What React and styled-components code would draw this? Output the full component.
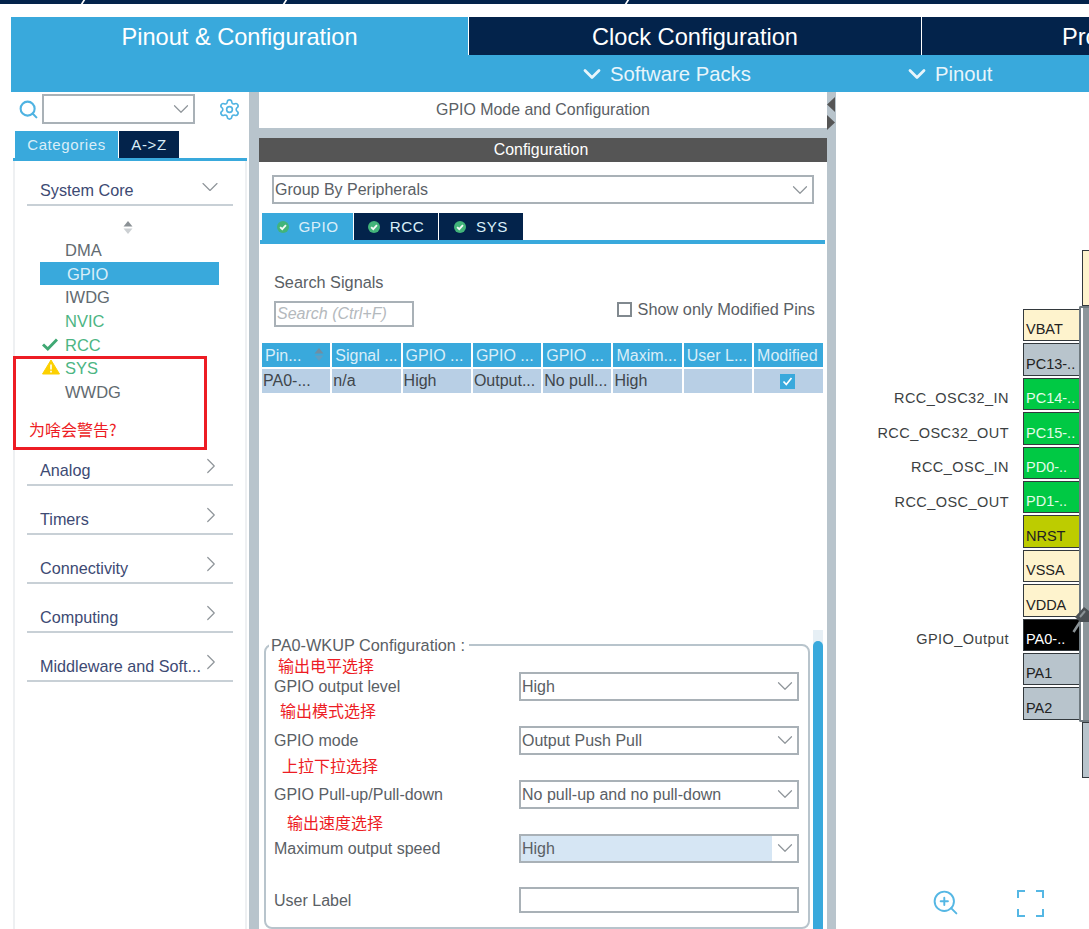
import React from "react";
import styled, { createGlobalStyle } from "styled-components";
import { ChevronDown, ChevronRight, Search, Settings, ZoomIn } from "lucide-react";

const BLUE = "#39a9dc";
const NAVY = "#03234b";
const SPLIT = "#b8c4cc";
const TEXT = "#5a6065";
const CJK = `"Liberation Sans", "Noto Sans CJK SC", sans-serif`;

const GlobalStyle = createGlobalStyle`
  html, body { margin: 0; padding: 0; background: #fff; }
  body { font-family: ${CJK}; }
  * { box-sizing: border-box; }
`;

const Page = styled.div`
  width: 1089px;
  height: 929px;
  overflow: hidden;
  background: #fff;
`;

const TopStrip = styled.div`
  display: flex;
  height: 4px;
  background: ${NAVY};
  overflow: hidden;
`;

const Slash = styled.span`
  width: 2px;
  height: 100%;
  margin-left: ${(p) => p.$gap}px;
  background: #fff;
  transform: skewX(-32deg);
`;

const Header = styled.header`
  margin: 13px 0 0 11px;
`;

const MainTabs = styled.div`
  display: flex;
  gap: 1px;
  height: 38px;
  overflow: hidden;
`;

const MainTab = styled.div`
  flex: none;
  width: ${(p) => p.$w}px;
  display: flex;
  align-items: center;
  justify-content: center;
  padding-top: 3px;
  background: ${(p) => (p.$active ? BLUE : NAVY)};
  color: #fff;
  font-size: 23.6px;
`;

const SubBar = styled.div`
  display: flex;
  align-items: center;
  gap: 152px;
  height: 37px;
  padding: 1px 0 0 567px;
  background: ${BLUE};
  color: #e8f5fb;
  font-size: 20.3px;
`;

const SubItem = styled.div`
  display: flex;
  align-items: center;
  gap: 4px;
`;

const Main = styled.main`
  display: flex;
  height: 837px;
  margin-left: 11px;
`;

const LeftPanel = styled.aside`
  position: relative;
  flex: none;
  width: 238px;
  display: flex;
  flex-direction: column;
`;

const Splitter = styled.div`
  position: relative;
  flex: none;
  width: ${(p) => p.$w}px;
  background: ${SPLIT};
`;

const SearchRow = styled.div`
  display: flex;
  align-items: center;
  flex: none;
  height: 39px;
  padding: 0 8px 5px 7px;
  color: #4fb3e2;
`;

const ComboBox = styled.div`
  display: flex;
  align-items: center;
  justify-content: space-between;
  flex: none;
  width: ${(p) => p.$w}px;
  height: ${(p) => p.$h || 29}px;
  padding-left: 1px;
  border: 2px solid #a9b1b7;
  background: #fff;
  color: ${TEXT};
  font-size: 16px;
`;

const Combo = styled(ComboBox)`
  margin: 0 auto 0 3px;
`;

const GroupCombo = styled(ComboBox)`
  margin: 13px 0 0 13px;
`;

const ArrowSlot = styled.span`
  display: flex;
  flex: none;
  height: 20px;
  align-items: center;
  margin-right: -1px;
  color: #8f959a;
`;

const CatTabs = styled.div`
  display: flex;
  flex: none;
  gap: 1px;
  height: 30px;
  margin: 0 2px;
  padding-left: 2px;
  border-bottom: 3px solid ${BLUE};
`;

const CatTab = styled.div`
  display: flex;
  align-items: center;
  justify-content: center;
  width: ${(p) => p.$w}px;
  padding-bottom: 1px;
  background: ${(p) => (p.$active ? BLUE : NAVY)};
  color: #d9eef8;
  font-size: 15px;
  letter-spacing: 0.6px;
`;

const CatBody = styled.div`
  flex: 1;
  margin: 0 2px;
  padding: 14px 0 0 12px;
  border-left: 2px solid #eef0f2;
  border-right: 2px solid #eef0f2;
`;

const CatHead = styled.div`
  display: flex;
  align-items: flex-end;
  justify-content: space-between;
  width: 206px;
  height: ${(p) => (p.$open ? 31 : 49)}px;
  padding: 0 9px 4px 13px;
  border-bottom: 2px solid #c8d0d6;
  color: #3d4a73;
  font-size: 16.2px;
  white-space: nowrap;
`;

const CatChevron = styled.span`
  display: flex;
  flex: none;
  align-items: center;
  height: 20px;
  margin: 0 0 ${(p) => (p.$open ? 3 : 4)}px -12px;
  color: #8f959a;
`;

const SortBox = styled.div`
  display: flex;
  justify-content: center;
  width: 202px;
  margin-top: 14px;
  height: 18px;
`;

const PeriphList = styled.ul`
  list-style: none;
  margin: 0 0 33px 13px;
  padding: 0;
`;

const Periph = styled.li`
  position: relative;
  width: 179px;
  height: 23.7px;
  line-height: 24.5px;
  padding-left: ${(p) => (p.$selected ? 27 : 25)}px;
  background: ${(p) => (p.$selected ? BLUE : "transparent")};
  color: ${(p) => (p.$selected ? "#d9eef8" : p.$ok ? "#4cb583" : "#626a70")};
  font-size: 16.5px;
`;

const PeriphMark = styled.span`
  position: absolute;
  left: 2px;
  top: 3px;
  display: flex;
`;

const RedBox = styled.div`
  position: absolute;
  left: 2px;
  top: 264px;
  width: 194px;
  height: 94px;
  display: flex;
  align-items: flex-end;
  padding: 0 0 7px 13px;
  border: 3px solid #ed1c24;
`;

const RedNote = styled.span`
  color: #ed1c24;
  font-family: "Noto Sans CJK SC", sans-serif;
  font-size: 16px;
  line-height: 22px;
  white-space: nowrap;
`;

const CenterPanel = styled.section`
  flex: none;
  width: 568px;
  display: flex;
  flex-direction: column;
  background: ${SPLIT};
`;

const ModeTitle = styled.div`
  display: flex;
  flex: none;
  align-items: center;
  justify-content: center;
  height: 36px;
  margin-bottom: 10px;
  background: #fff;
  color: ${TEXT};
  font-size: 15.9px;
`;

const ConfigTitle = styled.div`
  display: flex;
  flex: none;
  align-items: center;
  justify-content: center;
  height: 24px;
  padding-right: 4px;
  background: #555;
  color: #fff;
  font-size: 15.9px;
`;

const ConfigBody = styled.div`
  flex: 1;
  min-height: 0;
  overflow: hidden;
  background: #fff;
`;

const PeriphTabs = styled.div`
  display: flex;
  gap: 1px;
  height: 31px;
  margin: 9px 2px 0 1px;
  padding-left: 2px;
  border-bottom: 4px solid ${BLUE};
`;

const PeriphTab = styled.div`
  display: flex;
  align-items: center;
  justify-content: center;
  gap: 10px;
  width: ${(p) => p.$w}px;
  background: ${(p) => (p.$active ? BLUE : NAVY)};
  color: #d9eef8;
  font-size: 15.2px;
  letter-spacing: 0.5px;
`;

const SignalRow = styled.div`
  display: flex;
  align-items: flex-end;
  justify-content: space-between;
  margin-top: 29px;
  padding: 0 12px 0 15px;
  color: ${TEXT};
  font-size: 16.3px;
`;

const SignalLabel = styled.div`
  height: 18px;
  line-height: 18px;
  margin-bottom: 10px;
`;

const SignalInput = styled.div`
  width: 140px;
  height: 26px;
  padding-left: 1px;
  line-height: 22px;
  border: 2px solid #a9b1b7;
  color: #b4b9bd;
  font-size: 16px;
  font-style: italic;
`;

const ModifiedToggle = styled.div`
  display: flex;
  align-items: center;
  gap: 6px;
  margin-bottom: 8px;
`;

const Check = styled.span`
  width: 15px;
  height: 15px;
  border: 2px solid #81898f;
`;

const Table = styled.div`
  display: grid;
  grid-template-columns: repeat(7, 68.3px) 69px;
  gap: 2px;
  margin: 16px 0 0 3px;
  color: #40464b;
  font-size: 16px;
`;

const HeadCell = styled.div`
  position: relative;
  height: 24px;
  line-height: 25px;
  padding-left: 3px;
  background: ${BLUE};
  color: #d9eef8;
  white-space: nowrap;
  overflow: hidden;
`;

const SortSlot = styled.span`
  position: absolute;
  right: 6px;
  top: 4px;
  display: flex;
`;

const DataCell = styled.div`
  display: flex;
  align-items: center;
  justify-content: ${(p) => (p.$center ? "center" : "flex-start")};
  height: 24px;
  padding-left: ${(p) => (p.$center ? 0 : 1)}px;
  background: #b8cfe5;
  white-space: nowrap;
  overflow: hidden;
`;

const TickBox = styled.span`
  display: flex;
  align-items: center;
  justify-content: center;
  width: 15px;
  height: 15px;
  margin-right: 2px;
  background: ${BLUE};
`;

const FormRow = styled.div`
  display: flex;
  margin-top: 237px;
`;

const Fieldset = styled.fieldset`
  flex: none;
  width: 546px;
  height: 293px;
  margin: 6px 0 0 5px;
  padding: 5px 10px 0 8px;
  border: 2px solid #b8c4cc;
  border-radius: 8px;
  min-width: 0;
`;

const Legend = styled.legend`
  margin-left: -5px;
  padding: 0 4px 0 2px;
  color: ${TEXT};
  font-size: 16.3px;
  line-height: 18px;
`;

const Field = styled.div`
  position: relative;
  display: grid;
  grid-template-columns: 245px 280px;
  align-items: center;
  height: ${(p) => p.$h || 54}px;
  color: ${TEXT};
  font-size: 16px;
`;

const FieldLabel = styled.span`
  margin-top: 1px;
`;

const FieldNote = styled(RedNote)`
  position: absolute;
  left: ${(p) => p.$x}px;
  top: ${(p) => p.$y}px;
`;

const SelectValue = styled.span`
  display: flex;
  align-items: center;
  align-self: stretch;
  flex: 1;
  margin-left: -1px;
  padding: 1px 0 0 1px;
  background: ${(p) => (p.$hi ? "#d6e6f4" : "transparent")};
`;

const UserInput = styled.div`
  height: 26px;
  border: 2px solid #a9b1b7;
`;

const Scrollbar = styled.div`
  flex: none;
  width: 10px;
  margin-left: 3px;
  padding-top: 11px;
  background: #e6eff5;
`;

const Thumb = styled.div`
  height: 300px;
  border-radius: 5px 5px 0 0;
  background: ${BLUE};
`;

const Canvas = styled.div`
  position: relative;
  flex: 1;
  display: flex;
  justify-content: flex-end;
  padding-top: 158px;
`;

const PinColumn = styled.div`
  display: flex;
  flex-direction: column;
  gap: 2px;
  padding-top: 59px;
`;

const PinRow = styled.div`
  display: flex;
  align-items: center;
  justify-content: flex-end;
  gap: 14px;
  height: 32.4px;
`;

const PinLabel = styled.span`
  margin-top: 9px;
  color: #3c3f42;
  font-size: 14.5px;
  letter-spacing: 0.45px;
`;

const Pin = styled.div`
  display: flex;
  align-items: flex-end;
  width: 56px;
  height: 100%;
  padding: 0 0 1px 2px;
  border: 1px solid #33393d;
  border-right: 0;
  background: ${(p) => p.$bg};
  color: ${(p) => p.$fg || "#222"};
  font-size: 14.5px;
  line-height: 20px;
  white-space: nowrap;
  overflow: hidden;
`;

const Chip = styled.div`
  flex: none;
  width: 10px;
  display: flex;
  flex-direction: column;
  align-items: flex-end;
`;

const EdgePin = styled.div`
  width: 7px;
  height: 56px;
  border: 1px solid #33393d;
  border-right: 0;
  background: ${(p) => p.$bg};
`;

const ChipBody = styled.div`
  width: 10px;
  height: 416px;
  border: 2px solid #6f7a80;
  border-right: 0;
  border-radius: 2px 0 0 2px;
  background: linear-gradient(90deg, #fff 0 2px, #8c969b 2px 100%);
`;

const PinMark = styled.svg`
  position: absolute;
  right: 0;
  top: 513px;
`;

const CanvasTool = styled.div`
  position: absolute;
  top: ${(p) => p.$y}px;
  left: ${(p) => p.$x}px;
  display: flex;
  color: #55b7e4;
`;

const Collapse = styled.svg`
  position: absolute;
  left: 0;
  top: 5px;
`;

const Down = () => (
  <ArrowSlot>
    <ChevronDown size={26} strokeWidth={1.1} />
  </ArrowSlot>
);

const SortIcon = ({ top = "#7d8488", bottom = "#c4c9cc" }) => (
  <svg width="10" height="15" viewBox="0 0 10 15">
    <path d="M5 1 9.500 6.500H.5z" fill={top} />
    <path d="M5 14 9.500 8.500H.5z" fill={bottom} />
  </svg>
);

const TabBadge = () => (
  <svg width="12" height="12" viewBox="0 0 13 13">
    <circle cx="6.500" cy="6.500" r="6.500" fill="#42b47a" />
    <path d="M3.400 6.600 5.700 8.900 9.700 4.500" fill="none" stroke="#f4fbf7" strokeWidth="2" />
  </svg>
);

const categories = ["Analog", "Timers", "Connectivity", "Computing", "Middleware and Soft..."];

const periphs = [
  { name: "DMA" },
  { name: "GPIO", selected: true },
  { name: "IWDG" },
  { name: "NVIC", ok: true },
  { name: "RCC", ok: true, mark: "check" },
  { name: "SYS", ok: true, mark: "warn" },
  { name: "WWDG" },
];

const columns = ["Pin...", "Signal ...", "GPIO ...", "GPIO ...", "GPIO ...", "Maxim...", "User L...", "Modified"];
const cells = ["PA0-...", "n/a", "High", "Output...", "No pull...", "High", ""];

const fields = [
  { label: "GPIO output level", value: "High", note: "输出电平选择", x: 4, y: -5 },
  { label: "GPIO mode", value: "Output Push Pull", note: "输出模式选择", x: 6, y: -14 },
  { label: "GPIO Pull-up/Pull-down", value: "No pull-up and no pull-down", note: "上拉下拉选择", x: 8, y: -13 },
  { label: "Maximum output speed", value: "High", note: "输出速度选择", x: 13, y: -10, hi: true },
];

const pins = [
  { name: "VBAT", bg: "#fef3cd" },
  { name: "PC13-..", bg: SPLIT },
  { name: "PC14-..", bg: "#00c944", fg: "#e4fbe9", label: "RCC_OSC32_IN" },
  { name: "PC15-..", bg: "#00c944", fg: "#e4fbe9", label: "RCC_OSC32_OUT" },
  { name: "PD0-..", bg: "#00c944", fg: "#e4fbe9", label: "RCC_OSC_IN" },
  { name: "PD1-..", bg: "#00c944", fg: "#e4fbe9", label: "RCC_OSC_OUT" },
  { name: "NRST", bg: "#bdcc00" },
  { name: "VSSA", bg: "#fef3cd" },
  { name: "VDDA", bg: "#fef3cd" },
  { name: "PA0-..", bg: "#000", fg: "#fff", label: "GPIO_Output" },
  { name: "PA1", bg: SPLIT },
  { name: "PA2", bg: SPLIT },
];

const App = () => {
  return (
    <Page>
      <GlobalStyle />
      <TopStrip>
        <Slash $gap={82} />
        <Slash $gap={200} />
        <Slash $gap={340} />
      </TopStrip>

      <Header>
        <MainTabs>
          <MainTab $w={457} $active>Pinout &amp; Configuration</MainTab>
          <MainTab $w={452}>Clock Configuration</MainTab>
          <MainTab $w={453}>Project Manager</MainTab>
        </MainTabs>
        <SubBar>
          <SubItem><ChevronDown size={28} strokeWidth={2.4} />Software Packs</SubItem>
          <SubItem><ChevronDown size={28} strokeWidth={2.4} />Pinout</SubItem>
        </SubBar>
      </Header>

      <Main>
        <LeftPanel>
          <SearchRow>
            <Search size={21} strokeWidth={2.4} />
            <Combo $w={153} $h={30}><span /><Down /></Combo>
            <Settings size={23} strokeWidth={1.7} />
          </SearchRow>
          <CatTabs>
            <CatTab $w={103} $active>Categories</CatTab>
            <CatTab $w={60}>A-&gt;Z</CatTab>
          </CatTabs>
          <CatBody>
            <CatHead $open>
              System Core
              <CatChevron $open><ChevronDown size={28} strokeWidth={1} /></CatChevron>
            </CatHead>
            <SortBox><SortIcon top="#8b9195" bottom="#ccd0d3" /></SortBox>
            <PeriphList>
              {periphs.map((p) => (
                <Periph key={p.name} $selected={p.selected} $ok={p.ok}>
                  {p.mark === "check" && (
                    <PeriphMark>
                      <svg width="16" height="16" viewBox="0 0 16 16">
                        <path d="M1 8.500 5.800 13 15 3.500" fill="none" stroke="#3fa873" strokeWidth="3" />
                      </svg>
                    </PeriphMark>
                  )}
                  {p.mark === "warn" && (
                    <PeriphMark>
                      <svg width="18" height="16" viewBox="0 0 18 16">
                        <path d="M9 1 17.500 15H.5z" fill="#fcd000" stroke="#fcd000" strokeLinejoin="round" />
                        <path d="M9 5.500V10.500M9 11.800V13.500" stroke="#fff" strokeWidth="1.600" />
                      </svg>
                    </PeriphMark>
                  )}
                  {p.name}
                </Periph>
              ))}
            </PeriphList>
            {categories.map((c) => (
              <CatHead key={c}>
                {c}
                <CatChevron><ChevronRight size={26} strokeWidth={1.1} /></CatChevron>
              </CatHead>
            ))}
          </CatBody>
          <RedBox><RedNote>为啥会警告?</RedNote></RedBox>
        </LeftPanel>

        <Splitter $w={10} />

        <CenterPanel>
          <ModeTitle>GPIO Mode and Configuration</ModeTitle>
          <ConfigTitle>Configuration</ConfigTitle>
          <ConfigBody>
            <GroupCombo $w={542}>Group By Peripherals<Down /></GroupCombo>
            <PeriphTabs>
              <PeriphTab $w={91} $active><TabBadge />GPIO</PeriphTab>
              <PeriphTab $w={84}><TabBadge />RCC</PeriphTab>
              <PeriphTab $w={84}><TabBadge />SYS</PeriphTab>
            </PeriphTabs>
            <SignalRow>
              <div>
                <SignalLabel>Search Signals</SignalLabel>
                <SignalInput>Search (Ctrl+F)</SignalInput>
              </div>
              <ModifiedToggle><Check />Show only Modified Pins</ModifiedToggle>
            </SignalRow>
            <Table>
              {columns.map((c, i) => (
                <HeadCell key={i}>
                  {c}
                  {i === 0 && <SortSlot><SortIcon top="#6f8ea3" bottom="#5f9ec2" /></SortSlot>}
                </HeadCell>
              ))}
              {cells.map((c, i) => <DataCell key={i}>{c}</DataCell>)}
              <DataCell $center>
                <TickBox>
                  <svg width="11" height="11" viewBox="0 0 11 11">
                    <path d="M1.500 5.500 4.300 8.500 9.500 2" fill="none" stroke="#fff" strokeWidth="1.700" />
                  </svg>
                </TickBox>
              </DataCell>
            </Table>
            <FormRow>
              <Fieldset>
                <Legend>PA0-WKUP Configuration :</Legend>
                {fields.map((f) => (
                  <Field key={f.label}>
                    <FieldNote $x={f.x} $y={f.y}>{f.note}</FieldNote>
                    <FieldLabel>{f.label}</FieldLabel>
                    <ComboBox $w={280}>
                      <SelectValue $hi={f.hi}>{f.value}</SelectValue>
                      <Down />
                    </ComboBox>
                  </Field>
                ))}
                <Field $h={50}>
                  <FieldLabel>User Label</FieldLabel>
                  <UserInput />
                </Field>
              </Fieldset>
              <Scrollbar><Thumb /></Scrollbar>
            </FormRow>
          </ConfigBody>
        </CenterPanel>

        <Splitter $w={9}>
          <Collapse width="9" height="36" viewBox="0 0 9 36">
            <path d="M8 0V15L0 7.500z" fill="#555" />
            <path d="M0 18V33L8 25.500z" fill="#555" />
          </Collapse>
        </Splitter>

        <Canvas>
          <PinColumn>
            {pins.map((p) => (
              <PinRow key={p.name}>
                {p.label && <PinLabel>{p.label}</PinLabel>}
                <Pin $bg={p.bg} $fg={p.fg}>{p.name}</Pin>
              </PinRow>
            ))}
          </PinColumn>
          <Chip>
            <EdgePin $bg="#fef3cd" />
            <ChipBody />
            <EdgePin $bg={SPLIT} />
          </Chip>
          <PinMark width="17" height="28" viewBox="0 0 17 28">
            <path d="M8 17 1.500 27" stroke="#8a9296" strokeWidth="2.500" fill="none" />
            <path d="M3 12 12 2 17 6V17H8z" fill="#4a5054" />
            <path d="M8 12 13 6" stroke="#8a9296" strokeWidth="2" />
          </PinMark>
          <CanvasTool $x={95} $y={796}><ZoomIn size={29} strokeWidth={1.6} /></CanvasTool>
          <CanvasTool $x={181} $y={798}>
            <svg width="27" height="27" viewBox="0 0 27 27">
              <path d="M1 8V1H8M19 1H26V8M26 19V26H19M8 26H1V19" fill="none" stroke="currentColor" strokeWidth="2" />
            </svg>
          </CanvasTool>
        </Canvas>
      </Main>
    </Page>
  );
};

export default App;
